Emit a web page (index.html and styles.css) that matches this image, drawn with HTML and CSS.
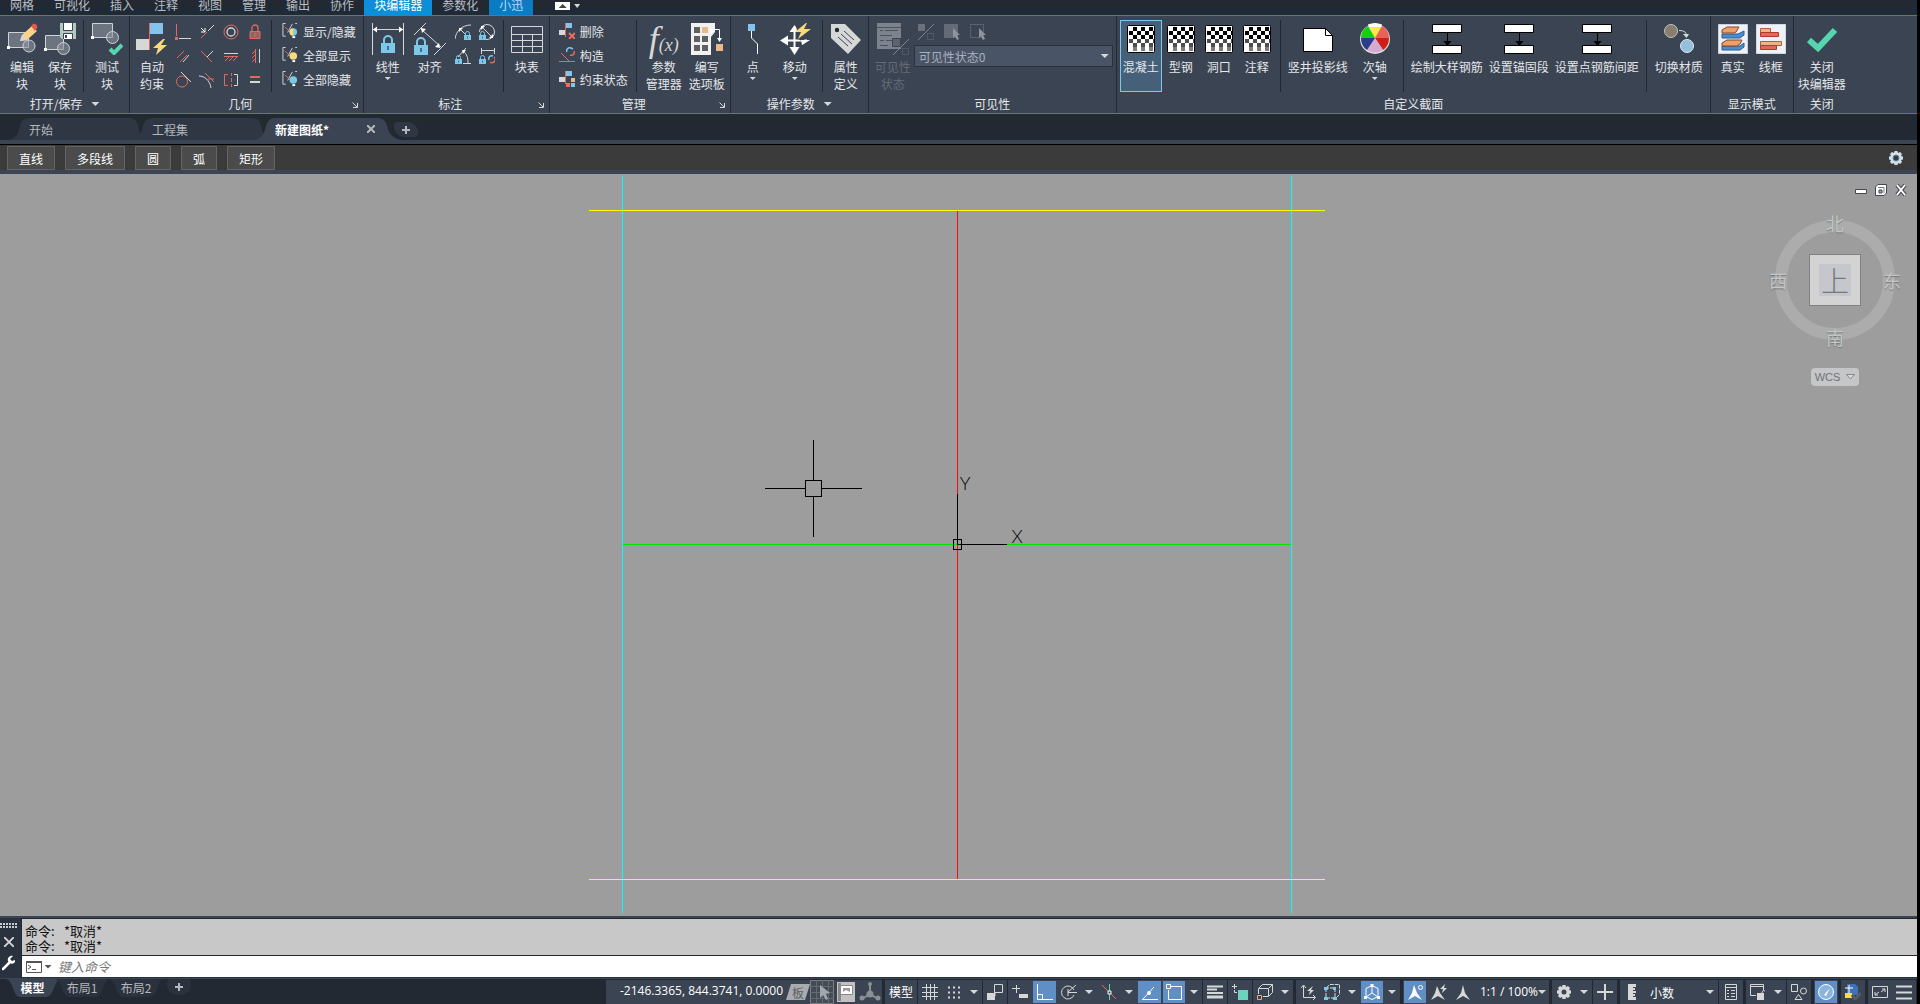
FILE: index.html
```html
<!DOCTYPE html>
<html lang="zh-CN">
<head>
<meta charset="utf-8">
<title>块编辑器</title>
<link rel="stylesheet" href="styles.css">
</head>
<body>
<svg class="defs" aria-hidden="true">
  <defs>
    <symbol id="bolt" viewBox="0 0 16 16"><path d="M11 0 1 9h5l-2 7L15 6H9l4-6z" fill="#f9d97c"/></symbol>
    <symbol id="lock" viewBox="0 0 14 18"><path d="M3 8V5a4 4 0 0 1 8 0v3" fill="none" stroke="#7cc8ea" stroke-width="2"/><path d="M0 8h14v10H0z" fill="#7cc8ea"/><path d="M7 11v4" stroke="#3b4453" stroke-width="1.4"/></symbol>
    <symbol id="edit" viewBox="0 0 32 32"><path d="M2.500 9.500h20v15h-20z" fill="#6c7480" stroke="#cfd2d6"/><circle cx="23" cy="23" r="6" fill="#8e959f" fill-opacity=".6" stroke="#cfd2d6"/><path d="M1 23h3v3H1z" fill="#fff"/><path d="M14 18l2-6L26 3l5 5-10 9z" fill="#f9d38a"/><path d="M25 3l2-2c2-1 5 1 4 4l-2 3z" fill="#e5584c"/><path d="M14 18l2-6 5 5z" fill="#d5d8da"/></symbol>
    <symbol id="save" viewBox="0 0 32 32"><path d="M1.500 12.500h18v14h-18z" fill="#6c7480" stroke="#cfd2d6"/><circle cx="19.500" cy="25.500" r="6" fill="#8e959f" fill-opacity=".6" stroke="#cfd2d6"/><path d="M0 25h3v3H0z" fill="#fff"/><path d="M16 0h16v16H18l-2-2z" fill="#b4c8bd"/><path d="M20 0h8v7h-8zM20 11h8v5h-8z" fill="#fff"/><path d="M19.500 0v7.500h9V0M19.500 16v-5.500h9V16" fill="none" stroke="#3b4453"/><path d="M21 12h2v3h-2z" fill="#3b4453"/></symbol>
    <symbol id="test" viewBox="0 0 32 32"><path d="M1.500.500h20v14h-20z" fill="#6c7480" stroke="#cfd2d6"/><circle cx="21.500" cy="14.500" r="6" fill="#8e959f" fill-opacity=".6" stroke="#cfd2d6"/><path d="M0 13h3v3H0z" fill="#fff"/><path d="M19 26l4 4 8-8" fill="none" stroke="#55d6ae" stroke-width="4"/></symbol>
    <symbol id="auto" viewBox="0 0 32 32"><path d="M14 0h13v11H14z" fill="#85c4ea"/><path d="M0 16h13v11H0z" fill="#d6d8d8"/><path d="M13.500 0v27" stroke="#e26a5c"/><use href="#bolt" x="16" y="16" width="16" height="16"/></symbol>
    <symbol id="g1" viewBox="0 0 16 16"><path d="M1.500 0v12" stroke="#e26a5c"/><path d="M4 14.500h12" stroke="#d6d8d8"/><path d="M0 13h3v3H0z" fill="#e26a5c"/></symbol>
    <symbol id="g2" viewBox="0 0 16 16"><path d="M2 14 8 8" stroke="#e26a5c"/><path d="M9 7l6-6" stroke="#d6d8d8"/><path d="M2 4l4 4M6 4v4H2" stroke="#fff" fill="none"/></symbol>
    <symbol id="g3" viewBox="0 0 16 16" fill="none"><circle cx="8" cy="8" r="7" stroke="#e26a5c"/><circle cx="8" cy="8" r="4" stroke="#d6d8d8" stroke-width="1.300"/></symbol>
    <symbol id="g4" viewBox="0 0 16 16"><path d="M5 7V4a3 3 0 0 1 6 0v3" fill="none" stroke="#e26a5c" stroke-width="1.300"/><path d="M3 7.500h10v7H3z" fill="#9b5f5d" stroke="#e26a5c"/><path d="M8 9v4" stroke="#e26a5c"/></symbol>
    <symbol id="g5" viewBox="0 0 16 16"><path d="M2 10 9 3M5 14l7-7" stroke="#e26a5c"/><path d="M8 14l6-7" stroke="#d6d8d8"/></symbol>
    <symbol id="g6" viewBox="0 0 16 16"><path d="M2 3l11 11" stroke="#e26a5c"/><path d="M8 9l6-6" stroke="#d6d8d8"/></symbol>
    <symbol id="g7" viewBox="0 0 16 16"><path d="M1 5.500h14" stroke="#d6d8d8"/><path d="M1 8.500h14M6 9l-4 4M10 9l-4 4M14 9l-4 4" stroke="#e26a5c"/></symbol>
    <symbol id="g8" viewBox="0 0 16 16"><path d="M12.500 1v14" stroke="#d6d8d8"/><path d="M8.500 1v14M8 3 5 6M8 7l-3 3M8 11l-3 3" stroke="#e26a5c"/></symbol>
    <symbol id="g9" viewBox="0 0 16 16" fill="none"><circle cx="7" cy="9.500" r="5.500" stroke="#e26a5c"/><path d="M6 0l10 10" stroke="#d6d8d8"/></symbol>
    <symbol id="g10" viewBox="0 0 16 16" fill="none"><path d="M0 4c5 0 11 4 12 12" stroke="#d6d8d8"/><path d="M6 1l9 9M9 7h6" stroke="#e26a5c"/></symbol>
    <symbol id="g11" viewBox="0 0 16 16" fill="none"><path d="M5 2.500H1.500v11H5M8.500 1v3M8.500 6v4M8.500 12v3" stroke="#e26a5c"/><path d="M11 2.500h3.500v11H11" stroke="#d6d8d8"/></symbol>
    <symbol id="g12" viewBox="0 0 16 16"><path d="M3 5h10" stroke="#e26a5c" stroke-width="2"/><path d="M3 10h10" stroke="#d6d8d8" stroke-width="2"/></symbol>
    <symbol id="showhide" viewBox="0 0 17 17"><path d="M4 .500H1V14h3M14 .500h2M11 1l-5 9" fill="none" stroke="#d6d8d8"/><path d="M3 4l6 6" stroke="#e26a5c"/><circle cx="12" cy="9.500" r="4" fill="#79cae8"/><path d="M12 5.500a4 4 0 0 0 0 8z" fill="#f9d97c"/><path d="M11 14h3v2h-3z" fill="#fff"/></symbol>
    <symbol id="showall" viewBox="0 0 17 17"><path d="M4 .500H1V14h3M14 .500h2M11 1l-5 9" fill="none" stroke="#d6d8d8"/><path d="M3 4l6 6" stroke="#e26a5c"/><circle cx="12" cy="9.500" r="4" fill="#f9d97c"/><path d="M11 14h3v2h-3z" fill="#fff"/></symbol>
    <symbol id="hideall" viewBox="0 0 17 17"><path d="M4 .500H1V14h3M14 .500h2M11 1l-5 9" fill="none" stroke="#d6d8d8"/><path d="M3 4l6 6" stroke="#e26a5c"/><circle cx="12" cy="9.500" r="4" fill="#79cae8"/><path d="M11 14h3v2h-3z" fill="#fff"/></symbol>
    <symbol id="linear" viewBox="0 0 32 32"><path d="M.500 0v32M31.500 0v32M1 6.500h30" stroke="#d6d8d8" fill="none"/><path d="M1 6.500l4-3v6zM31 6.500l-4-3v6z" fill="#fff"/><use href="#lock" x="9" y="12" width="14" height="18"/></symbol>
    <symbol id="aligned" viewBox="0 0 32 32"><path d="M0 12 12 0M20 32l12-12M7 6l20 18" stroke="#d6d8d8"/><path d="M7 5l5 1-4 4zM26 25l-5-1 4-4z" fill="#fff"/><use href="#lock" x="0" y="14" width="14" height="18"/></symbol>
    <symbol id="d1" viewBox="0 0 16 16"><path d="M0 15C1 7 7 1 16 1M5 5l6 6" fill="none" stroke="#d6d8d8"/><path d="M4 4h4l-4 4z" fill="#fff"/><use href="#lock" x="9" y="7" width="7" height="9"/></symbol>
    <symbol id="d2" viewBox="0 0 16 16"><circle cx="8" cy="8" r="7.500" fill="none" stroke="#d6d8d8"/><path d="M3 3l10 10" stroke="#d6d8d8"/><path d="M2 2h4L2 6zM14 14h-4l4-4z" fill="#fff"/><path d="M0 8h7v8H0z" fill="#3b4453"/><use href="#lock" x="0" y="7" width="7" height="9"/></symbol>
    <symbol id="d3" viewBox="0 0 16 16"><path d="M3 9l8-9M8 15.500h8M8 3c4 3 5 7 5 12" fill="none" stroke="#d6d8d8"/><path d="M7 2h4L8 6z" fill="#fff"/><use href="#lock" x="0" y="7" width="7" height="9"/></symbol>
    <symbol id="d4" viewBox="0 0 16 16"><path d="M2.500 0v6M15.500 0v6M3 2.500h12" stroke="#d6d8d8"/><use href="#lock" x="0" y="7" width="7" height="9"/><path d="M10 12a3 3 0 0 1 4-4" stroke="#7cc8ea" stroke-width="1.500" fill="none"/><path d="M15 9a3 3 0 0 1-4 5" stroke="#e26a5c" stroke-width="1.500" fill="none"/></symbol>
    <symbol id="table" viewBox="0 0 32 32"><path d="M.500 3.500h31v26H.500zM1 11.500h30M1 17.500h30M1 23.500h30M11.500 11v18M21.500 11v18" fill="none" stroke="#d6d8d8"/></symbol>
    <symbol id="m1" viewBox="0 0 16 16"><path d="M6 0h7v5H6z" fill="#85c4ea"/><path d="M0 7h6v5H0z" fill="#d6d8d8"/><path d="M6.500 0v14" stroke="#e26a5c"/><path d="M10 10l6 6M16 10l-6 6" stroke="#ef6a5e" stroke-width="2"/></symbol>
    <symbol id="m2" viewBox="0 0 16 16"><path d="M0 14.500h16M2 6l8 8" stroke="#e26a5c"/><path d="M8 5a3 3 0 0 1 4-4l2 1" stroke="#7cc8ea" stroke-width="1.500" fill="none"/><path d="M15 4a3 3 0 0 1-4 4" stroke="#e26a5c" stroke-width="1.500" fill="none"/></symbol>
    <symbol id="m3" viewBox="0 0 16 16"><path d="M6 0h7v5H6z" fill="#85c4ea"/><path d="M0 6h6v5H0z" fill="#d6d8d8"/><path d="M6.500 0v13" stroke="#e26a5c"/><path d="M12 7h4v4h-4z" fill="#e9b98a"/><path d="M7 12h4v4H7z" fill="#ef6a5e"/><path d="M12 12h4v4h-4z" fill="#7cc8ea"/></symbol>
    <symbol id="palette" viewBox="0 0 32 32"><path d="M0 0h24v9l-4 5v18H0z" fill="#f1f1f1"/><path d="M3 4h6v6H3zM3 13h6v6H3zM11 13h6v6h-6zM3 22h6v6H3zM11 22h6v6h-6z" fill="#606060"/><path d="M11 4h6v6h-6zM25 21h7v7h-7z" fill="#e9b98a"/><path d="M20 6.500h8.500V16" fill="none" stroke="#fff"/><path d="M26 15h5l-2.500 4zM19 6l5 2-4 3z" fill="#fff"/></symbol>
    <symbol id="point" viewBox="0 0 32 32"><path d="M11 1h7v7h-7z" fill="#85c4ea"/><path d="M14.500 8v7l6 6v10" fill="none" stroke="#fff"/></symbol>
    <symbol id="move" viewBox="0 0 32 32"><path d="M15.500 4v24M4 17.500h24" stroke="#fff" stroke-width="2"/><path d="M15.500 2l-5 7h10zM15.500 32l5-8h-10zM1 17.500l8-5v10zM31 17l-8 5v-5z" fill="#fff"/><path d="M17 1h15v11l-9 6-4-2z" fill="#3b4453"/><path d="M27 0 16 9h6l-3 7 13-10h-7l3-6z" fill="#f9d97c"/><path d="M22 17h8l-7 5z" fill="#fff"/></symbol>
    <symbol id="tag" viewBox="0 0 32 32"><path d="M1 1h14l16 16-13 14L1 15z" fill="#d6d8d8"/><circle cx="7" cy="7" r="2.200" fill="#222933"/><path d="M14 8l10 9M11 11l11 10M8 14l10 9" stroke="#3b4453"/></symbol>
    <symbol id="vis" viewBox="0 0 32 32"><path d="M0 0h24v26H0z" fill="#7d838c"/><path d="M0 4.500h24M3 7.500h3M8 7.500h13M3 12.500h12M3 17.500h4M9 17.500h7M3 22.500h8" stroke="#4a525f"/><path d="M15.500 15.500h8v8h-8z" fill="#5d6470" stroke="#3b4453"/><path d="M16 32 32 16" stroke="#7d838c"/><path d="M25.500 25.500h6v6h-6z" fill="none" stroke="#626a76" stroke-dasharray="1 1"/></symbol>
    <symbol id="v1" viewBox="0 0 16 16"><path d="M0 0h7v7H0z" fill="#6a717c"/><path d="M0 16 16 0" stroke="#7d838c"/><path d="M9.500 9.500h6v6h-6z" fill="none" stroke="#6a717c" stroke-dasharray="1 1"/></symbol>
    <symbol id="v2" viewBox="0 0 16 16"><path d="M0 0h14v14H0z" fill="#646b76"/><path d="M9 4v10l2-2 2 4 2-1-2-4h3z" fill="#8f959e"/></symbol>
    <symbol id="v3" viewBox="0 0 16 16"><path d="M.500.500h13v13H.500z" fill="none" stroke="#6a717c" stroke-dasharray="2 1"/><path d="M9 4v10l2-2 2 4 2-1-2-4h3z" fill="#8f959e"/></symbol>
    <pattern id="chk" width="8" height="8" patternUnits="userSpaceOnUse"><path d="M4 0h4v4H4zM0 4h4v4H0z"/></pattern>
    <symbol id="checker" viewBox="0 0 32 32"><rect x="2.500" y="2.500" width="27" height="27" rx="1" fill="#fff" stroke="#000"/><path d="M4 4h25v25H4z" fill="url(#chk)"/><path d="M3 16h26v8H3z" fill="#fff" fill-opacity=".3"/><path d="M3 24h26v5H3z" fill="#fff"/><path d="M8 24h4v4H8zM16 24h4v4h-4zM24 24h4v4h-4z" fill="#7c7c7c"/></symbol>
    <symbol id="shaft" viewBox="0 0 32 32"><path d="M1.500 5.500h22l7 7v16h-29z" fill="#fff" stroke="#000"/><path d="M23.500 5.500v7h7" fill="none" stroke="#000"/></symbol>
    <symbol id="wheel" viewBox="0 0 32 32"><circle cx="16" cy="16" r="15" fill="#ddd"/><path d="M16 15 9 2q7-3 14 0z" fill="#ffe93c"/><path d="M9 1.500q7-3 14 0L22 4H10z" fill="#fff"/><path d="M16 15l7-12q7 4 7 12z" fill="#ec6157"/><path d="M16 15h14q0 8-6 12z" fill="#cf1f15"/><path d="M16 15l8 12q-8 5-16 0z" fill="#d6a9d1"/><path d="M16 15H2q0 8 6 12z" fill="#2a3c8c"/><path d="M16 15 9 3Q2 7 2 15z" fill="#10d210"/></symbol>
    <symbol id="rebar" viewBox="0 0 32 32"><path d="M1.500 1.500h29v8h-29zM1.500 22.500h29v8h-29z" fill="#fff" stroke="#000"/><path d="M16.500 10v10" stroke="#000"/><path d="M12.500 18h8l-4 5z"/></symbol>
    <symbol id="swap" viewBox="0 0 32 32"><circle cx="8" cy="8" r="6.500" fill="#8b7c70" stroke="#b5c9b8"/><circle cx="24" cy="23" r="6.500" fill="#94bedb" stroke="#d9edf5"/><path d="M16 7.500q8 0 7 5" fill="none" stroke="#d6d8d8"/><path d="M20 11h6l-2.500 4z" fill="#d6d8d8"/></symbol>
    <symbol id="real" viewBox="0 0 32 32"><path d="M1.500 1.500h29v29h-29z" fill="#eef1f8" stroke="#c9cfdd"/><path d="M5 11h16l6-3v4l-4 3H5z" fill="#4b8fca" stroke="#2b5d96"/><path d="M5 7l5-3h12l-3 5-2 1H5z" fill="#e9a26e" stroke="#8c4420"/><path d="M5 23h18l4-3v4l-4 3H5z" fill="#4b8fca" stroke="#2b5d96"/><path d="M5 20l5-3h15l-2 4-3 2H5z" fill="#e9a26e" stroke="#8c4420"/></symbol>
    <symbol id="wire" viewBox="0 0 32 32"><path d="M1.500 1.500h29v29h-29z" fill="#eef1f8" stroke="#d4d8e0"/><path d="M5.500 5.500h10v4h-10zM5.500 18.500h21v4h-21z" fill="#e8b58a" stroke="#b1603a"/><path d="M5.500 9.500h18v4h-18zM5.500 22.500h16v4h-16z" fill="#e7655a" stroke="#b13a2a"/></symbol>
    <symbol id="done" viewBox="0 0 32 32"><path d="M3 17l9 8L29 7" fill="none" stroke="#55d6ae" stroke-width="6"/></symbol>
    <symbol id="launch" viewBox="0 0 6 6"><path d="M.500.500 5 5M5.500 1v4.500H1" fill="none" stroke="#d6d8d8"/></symbol>
    <symbol id="gear" viewBox="0 0 18 18"><path d="M7.500 1h3l.5 2 2-1 2 2-1 2 2 .500v3l-2 .500 1 2-2 2-2-1-.500 2h-3l-.500-2-2 1-2-2 1-2L2 9.500v-3L4 6 3 4l2-2 2 1z" fill="currentColor" transform="translate(0 1)"/></symbol>
  </defs>
</svg>

<nav class="menu">
  <button>网格</button><button>可视化</button><button>插入</button><button>注释</button><button>视图</button><button>管理</button><button>输出</button><button>协作</button><button class="active">块编辑器</button><button>参数化</button><button class="alt">小迅</button>
  <span class="collapse"><i class="tri up"></i></span><i class="tri"></i>
</nav>

<div class="ribbon">
  <section class="panel">
    <div class="body">
      <button class="item w38"><svg class="i32"><use href="#edit"/></svg>编辑<br>块</button>
      <button class="item w38"><svg class="i32"><use href="#save"/></svg>保存<br>块</button>
      <i class="sep"></i>
      <button class="item w38"><svg class="i32"><use href="#test"/></svg>测试<br>块</button>
    </div>
    <h2>打开/保存<i class="tri"></i></h2>
  </section>
  <section class="panel">
    <div class="body">
      <button class="item w38"><svg class="i32"><use href="#auto"/></svg>自动<br>约束</button>
      <div class="grid c4">
        <button aria-label="重合"><svg><use href="#g1"/></svg></button><button aria-label="共线"><svg><use href="#g2"/></svg></button><button aria-label="同心"><svg><use href="#g3"/></svg></button><button aria-label="固定"><svg><use href="#g4"/></svg></button>
        <button aria-label="平行"><svg><use href="#g5"/></svg></button><button aria-label="垂直"><svg><use href="#g6"/></svg></button><button aria-label="水平"><svg><use href="#g7"/></svg></button><button aria-label="竖直"><svg><use href="#g8"/></svg></button>
        <button aria-label="相切"><svg><use href="#g9"/></svg></button><button aria-label="平滑"><svg><use href="#g10"/></svg></button><button aria-label="对称"><svg><use href="#g11"/></svg></button><button aria-label="相等"><svg><use href="#g12"/></svg></button>
      </div>
      <i class="sep"></i>
      <div class="rows">
        <button><svg><use href="#showhide"/></svg>显示/隐藏</button>
        <button><svg><use href="#showall"/></svg>全部显示</button>
        <button><svg><use href="#hideall"/></svg>全部隐藏</button>
      </div>
    </div>
    <h2 class="has-launch">几何<svg class="launch"><use href="#launch"/></svg></h2>
  </section>
  <section class="panel">
    <div class="body">
      <button class="item w42"><svg class="i32"><use href="#linear"/></svg>线性<i class="tri sm"></i></button>
      <button class="item w42"><svg class="i32"><use href="#aligned"/></svg>对齐</button>
      <div class="grid c2">
        <button aria-label="半径"><svg><use href="#d1"/></svg></button><button aria-label="直径"><svg><use href="#d2"/></svg></button>
        <button aria-label="角度"><svg><use href="#d3"/></svg></button><button aria-label="转换"><svg><use href="#d4"/></svg></button>
      </div>
      <i class="sep"></i>
      <button class="item w38"><svg class="i32"><use href="#table"/></svg>块表</button>
    </div>
    <h2 class="has-launch">标注<svg class="launch"><use href="#launch"/></svg></h2>
  </section>
  <section class="panel">
    <div class="body">
      <div class="rows">
        <button><svg><use href="#m1"/></svg>删除</button>
        <button><svg><use href="#m2"/></svg>构造</button>
        <button><svg><use href="#m3"/></svg>约束状态</button>
      </div>
      <i class="sep"></i>
      <button class="item w46"><span class="fx"><b>f</b>(x)</span>参数<br>管理器</button>
      <button class="item w40"><svg class="i32"><use href="#palette"/></svg>编写<br>选项板</button>
    </div>
    <h2 class="has-launch">管理<svg class="launch"><use href="#launch"/></svg></h2>
  </section>
  <section class="panel">
    <div class="body">
      <button class="item w38"><svg class="i32"><use href="#point"/></svg>点<i class="tri sm"></i></button>
      <button class="item w46"><svg class="i32"><use href="#move"/></svg>移动<i class="tri sm"></i></button>
      <i class="sep"></i>
      <button class="item w38"><svg class="i32"><use href="#tag"/></svg>属性<br>定义</button>
    </div>
    <h2>操作参数<i class="tri"></i></h2>
  </section>
  <section class="panel">
    <div class="body">
      <button class="item w42" disabled><svg class="i32"><use href="#vis"/></svg>可见性<br>状态</button>
      <div class="visibility">
        <div class="vis-tools">
          <button aria-label="可见性模式" disabled><svg><use href="#v1"/></svg></button><button aria-label="使可见" disabled><svg><use href="#v2"/></svg></button><button aria-label="使不可见" disabled><svg><use href="#v3"/></svg></button>
        </div>
        <div class="combo"><select aria-label="可见性状态" disabled><option>可见性状态0</option></select><i class="tri"></i></div>
      </div>
    </div>
    <h2>可见性</h2>
  </section>
  <section class="panel">
    <div class="body">
      <button class="item w42 on"><svg class="i32"><use href="#checker"/></svg>混凝土</button>
      <button class="item w38"><svg class="i32"><use href="#checker"/></svg>型钢</button>
      <button class="item w38"><svg class="i32"><use href="#checker"/></svg>洞口</button>
      <button class="item w38"><svg class="i32"><use href="#checker"/></svg>注释</button>
      <i class="sep"></i>
      <button class="item w66"><svg class="i32"><use href="#shaft"/></svg>竖井投影线</button>
      <button class="item w48"><svg class="i32"><use href="#wheel"/></svg>次轴<i class="tri sm"></i></button>
      <i class="sep"></i>
      <button class="item w78"><svg class="i32"><use href="#rebar"/></svg>绘制大样钢筋</button>
      <button class="item w66"><svg class="i32"><use href="#rebar"/></svg>设置锚固段</button>
      <button class="item w90"><svg class="i32"><use href="#rebar"/></svg>设置点钢筋间距</button>
      <i class="sep"></i>
      <button class="item w56"><svg class="i32"><use href="#swap"/></svg>切换材质</button>
    </div>
    <h2>自定义截面</h2>
  </section>
  <section class="panel">
    <div class="body">
      <button class="item w38"><svg class="i32"><use href="#real"/></svg>真实</button>
      <button class="item w38"><svg class="i32"><use href="#wire"/></svg>线框</button>
    </div>
    <h2>显示模式</h2>
  </section>
  <section class="panel last">
    <div class="body">
      <button class="item w56"><svg class="i32"><use href="#done"/></svg>关闭<br>块编辑器</button>
    </div>
    <h2>关闭</h2>
  </section>
</div>

<nav class="docs">
  <button class="doc"><svg viewBox="0 0 140 22" preserveAspectRatio="none"><path d="M0 22C8 21 10 16 12 8Q14 0 21 0H121Q129 0 130 8 132 20 140 22z"/></svg>开始</button>
  <button class="doc"><svg viewBox="0 0 140 22" preserveAspectRatio="none"><path d="M0 22C8 21 10 16 12 8Q14 0 21 0H121Q129 0 130 8 132 20 140 22z"/></svg>工程集</button>
  <button class="doc current"><svg viewBox="0 0 148 22" preserveAspectRatio="none"><path d="M0 22C8 21 10 16 12 8Q14 0 21 0H124Q131 0 133 8 136 21 148 22z"/></svg>新建图纸*<span class="x"><svg viewBox="0 0 8 8"><path d="M0 0l8 8M8 0 0 8" stroke="#b4b8bd" stroke-width="2"/></svg></span></button>
  <button class="add" aria-label="新建"><svg viewBox="0 0 8 8"><path d="M4 0v8M0 4h8" stroke="#b4b8bd" stroke-width="2"/></svg></button>
</nav>

<div class="tools">
  <button>直线</button><button>多段线</button><button>圆</button><button>弧</button><button>矩形</button>
  <button class="settings" aria-label="设置"><svg viewBox="0 0 18 18"><use href="#gear" color="#d3e0ea"/><circle cx="9" cy="9" r="3" fill="#3b3b3b" stroke="#5d83a8"/></svg></button>
</div>

<main class="canvas">
  <svg class="drawing" viewBox="0 0 1917 742" preserveAspectRatio="xMidYMid meet" shape-rendering="crispEdges" fill="none">
    <path d="M622.500 2v737M1291.500 2v737" stroke="#0ff"/>
    <path d="M589 36.500h736M589 705.500h736" stroke="#ff0"/>
    <path d="M623 370.500h668" stroke="#00e600"/>
    <path d="M957.500 37v668" stroke="#f01010"/>
    <path d="M957.500 320v50M957 370.500h50M953.500 365.500h8v10h-8z" stroke="#000"/>
    <path d="M813.500 266v40M813.500 323v40M765 314.500h40M822 314.500h40M805.500 306.500h16v16h-16z" stroke="#000"/>
    <text class="axis" x="965" y="316" text-anchor="middle">Y</text>
    <text class="axis" x="1017" y="369" text-anchor="middle">X</text>
  </svg>
  <div class="winbtns">
    <button aria-label="最小化"><svg viewBox="0 0 12 12"><path d="M.500 5.500h11v4H.500z" fill="#fff" stroke="#444850"/></svg></button>
    <button aria-label="还原"><svg viewBox="0 0 12 12"><path d="M3 .500h8.500V9L9 11.500H.500V3z" fill="#fff" stroke="#444850"/><path d="M3 3.500h6V9" fill="none" stroke="#777"/><path d="M4 6h3v3H4z" fill="#9e9e9e" stroke="#444850"/></svg></button>
    <button aria-label="关闭"><svg viewBox="0 0 12 12"><path d="M2 1l8 10M10 1 2 11" stroke="#444850" stroke-width="4"/><path d="M2 1l8 10M10 1 2 11" stroke="#fff" stroke-width="2"/></svg></button>
  </div>
  <div class="cube">
    <span class="n">北</span><span class="w">西</span><button class="face"><span>上</span></button><span class="e">东</span><span class="s">南</span>
  </div>
  <button class="wcs">WCS<svg viewBox="0 0 9 6"><path d="M.500.500h8L4.500 5z" fill="#d8d8d8" stroke="#85898f"/></svg></button>
</main>

<div class="command">
  <div class="grip">
    <svg width="18" height="6" viewBox="0 0 18 6"><path d="M0 1h18M0 4h18" stroke="#c8ccd0" stroke-width="2" stroke-dasharray="2 1"/></svg>
    <button aria-label="关闭命令行"><svg width="10" height="10" viewBox="0 0 8 8"><path d="M0 0l8 8M8 0 0 8" stroke="#d6d8d8" stroke-width="1.500"/></svg></button>
    <button aria-label="自定义"><svg width="14" height="16" viewBox="0 0 14 16"><path d="M1 14l6-6" stroke="#fff" stroke-width="2.500" stroke-linecap="round"/><path d="M11 1C8 0 5 3 6 6s5 4 7 1V5l-3 1-2-2z" fill="#fff"/></svg></button>
  </div>
  <div class="console">
    <div class="history"><p><span>命令:</span>*取消*</p><p><span>命令:</span>*取消*</p></div>
    <label class="prompt"><svg width="16" height="12" viewBox="0 0 16 12"><path d="M.500.500h15v11H.500z" fill="none" stroke="#555"/><path d="M0 1h16" stroke="#555" stroke-width="2"/><path d="M2 4l3 2-3 2M6 8.500h4" fill="none" stroke="#555"/></svg><i class="tri"></i><input type="text" placeholder="键入命令" aria-label="键入命令"></label>
  </div>
</div>

<footer class="bottom">
  <nav class="layouts">
    <button class="lay current"><svg viewBox="0 0 54 18" preserveAspectRatio="none"><path d="M0 0h54C48 2 48 18 40 18H14C7 18 8 2 0 0z"/></svg>模型</button>
    <button class="lay"><svg viewBox="0 0 54 18" preserveAspectRatio="none"><path d="M0 0h54C48 2 48 18 40 18H14C7 18 8 2 0 0z"/></svg>布局1</button>
    <button class="lay"><svg viewBox="0 0 54 18" preserveAspectRatio="none"><path d="M0 0h54C48 2 48 18 40 18H14C7 18 8 2 0 0z"/></svg>布局2</button>
    <button class="addlay" aria-label="新建布局"><svg viewBox="0 0 8 8"><path d="M4 0v8M0 4h8" stroke="#b4b8bd" stroke-width="2"/></svg></button>
  </nav>
  <div class="status">
    <div class="grp">
      <span class="coords">-2146.3365, 844.3741, 0.0000</span>
      <button class="c board"><svg viewBox="0 0 24 18"><path d="M5 1h19l-5 16H0z" fill="#a8acae"/></svg><span>板</span></button>
      <button class="c" aria-label="选择"><svg class="full" viewBox="0 0 24 24"><path d="M.500.500h23v23H.500z" fill="#434b56" stroke="#7f7f7f"/><path d="M6.500 0v24M12.500 0v24M18.500 0v24M0 6.500h24M0 12.500h24M0 18.500h24" stroke="#66696e"/><path d="M10 5v13l3-3 3 5 2-1-2-5 4-1z" fill="#a3a7ac"/></svg></button>
      <button class="c" aria-label="图纸"><svg class="full" viewBox="0 0 24 24"><path d="M3 2h18v20H3z" fill="#c2c2c2"/><path d="M4 3h3v18H4z" fill="#888"/><path d="M6.500 5.500h12v9h-12z" fill="#fff" stroke="#888"/><path d="M9 8v4l3-2 4 2V8z" fill="#999"/></svg></button>
      <button class="c" aria-label="坐标系"><svg class="full" viewBox="0 0 24 24"><path d="M12 4v10L4 19M12 14l8 5" fill="none" stroke="#8b8e92" stroke-width="2"/><circle cx="12" cy="4" r="2" fill="#8b8e92"/><circle cx="12" cy="14" r="3.500" fill="#8b8e92"/><circle cx="4" cy="18" r="2.500" fill="#8b8e92"/><circle cx="20" cy="18" r="2.500" fill="#8b8e92"/></svg></button>
    </div>
    <div class="grp">
      <button class="c txt">模型</button>
      <button class="c bl" aria-label="栅格"><svg viewBox="0 0 16 16"><path d="M4.500 0v16M8.500 0v16M12.500 0v16M0 3.500h16M0 8.500h16M0 12.500h16" stroke="#d6d8d8"/></svg></button>
      <button class="c" aria-label="捕捉"><svg viewBox="0 0 16 16"><path d="M2 3.500h12M2 8.500h12M2 13.500h12" stroke="#d6d8d8" stroke-width="2" stroke-dasharray="2 3"/></svg></button><button class="v" aria-label="捕捉选项"><i class="tri"></i></button>
      <button class="c bl" aria-label="推断约束"><svg viewBox="0 0 16 16"><path d="M7.500.500h8v8h-8zM8 8v4" fill="none" stroke="#d6d8d8"/><path d="M0 9h8v7H0z" fill="#d6d8d8"/></svg></button>
      <button class="c bl" aria-label="动态输入"><svg viewBox="0 0 16 16"><path d="M4.500 1v8M0 4.500h8" stroke="#d6d8d8"/><path d="M7 10h9v4H7z" fill="#d6d8d8"/></svg></button>
      <button class="c act bl" aria-label="正交"><svg viewBox="0 0 16 16"><path d="M.500 0v15.500H16M1 10.500h4.500V15" fill="none" stroke="#fff"/></svg></button>
      <button class="c" aria-label="极轴"><svg viewBox="0 0 16 16"><path d="M13 6a6.500 6.500 0 1 0 0 5M7 8.500h9M7 8l8-7M7 5v7" fill="none" stroke="#d6d8d8"/></svg></button><button class="v" aria-label="极轴选项"><i class="tri"></i></button>
      <button class="c" aria-label="等轴测"><svg viewBox="0 0 16 16"><path d="M1 1l14 14" stroke="#e26a5c"/><path d="M8.500 0v16" stroke="#55d6ae"/><path d="M7 7h3v3H7z" fill="#3b4453" stroke="#fff"/></svg></button><button class="v" aria-label="等轴测选项"><i class="tri"></i></button>
      <button class="c act bl" aria-label="对象追踪"><svg viewBox="0 0 16 16"><path d="M0 15.500h16M1 15 12 3" stroke="#fff"/><circle cx="7" cy="9" r="2" fill="#fff"/></svg></button>
      <button class="c act" aria-label="对象捕捉"><svg viewBox="0 0 16 16"><path d="M5 2.500h10.500v13h-13V6M.500.500h4v4h-4z" fill="none" stroke="#fff"/></svg></button><button class="v" aria-label="捕捉设置"><i class="tri"></i></button>
      <button class="c bl" aria-label="线宽"><svg viewBox="0 0 16 16"><path d="M0 2.500h16M0 5.500h10M0 9h16" stroke="#d6d8d8" stroke-width="2"/><path d="M0 13h16" stroke="#d6d8d8" stroke-width="3"/></svg></button>
      <button class="c bl" aria-label="透明度"><svg viewBox="0 0 16 16"><path d="M2.500 0v5M0 2.500h5M2.500 6v2.500H5" fill="none" stroke="#d6d8d8"/><path d="M6 6h10v10H6z" fill="#6cd3bd"/></svg></button>
      <button class="c bl" aria-label="三维捕捉"><svg viewBox="0 0 16 16"><path d="M1.500 10V4.500l4-4h10v8l-4 4H6M2 4.500h9.500V12M11.500 4.500l4-4" fill="none" stroke="#d6d8d8"/><path d="M.500 11.500h4v4h-4z" fill="none" stroke="#e9a77c"/></svg></button><button class="v" aria-label="三维选项"><i class="tri"></i></button>
    </div>
    <div class="grp">
      <button class="c" aria-label="动态坐标"><svg viewBox="0 0 16 16"><path d="M3.500 2v11.500H15M1 4l2.500-3L6 4M13 11l2.500 2.500L13 16" fill="none" stroke="#d6d8d8"/><path d="M13 2 7 7h3l-1 4 5-5h-3z" fill="#d6d8d8"/></svg></button>
      <button class="c" aria-label="选择过滤"><svg viewBox="0 0 16 16"><path d="M2 4l4-3.500h9.500v10l-3 3M2 4v10h9V4H2" fill="none" stroke="#d6d8d8" stroke-dasharray="4 1"/><path d="M0 3h4v3H0zM0 13h4v3H0zM9 13h4v3H9zM9 3h3v3H9z" fill="#7cc8ea"/></svg></button><button class="v" aria-label="过滤选项"><i class="tri"></i></button>
      <button class="c act" aria-label="小控件"><svg viewBox="0 0 16 16"><path d="M8 1.500l6 3v8l-6 3-6-3v-8zM8 2v7M8 9l-6 4M8 9l6 4" fill="none" stroke="#fff"/><path d="M6.500 0h3v3h-3zM0 12h3v3H0zM13 12h3v3h-3z" fill="#fff"/></svg></button><button class="v" aria-label="小控件选项"><i class="tri"></i></button>
    </div>
    <div class="grp">
      <button class="c act" aria-label="注释可见性"><svg viewBox="0 0 16 16"><path d="M7 1l3 8 5 7-7-4-7 4 4-7z" fill="#fff"/><circle cx="13.500" cy="3.500" r="2" fill="none" stroke="#fff"/></svg></button>
      <button class="c" aria-label="自动缩放"><svg viewBox="0 0 16 16"><path d="M6 2l3 7 5 7-7-4-7 4 4-7z" fill="#d6d8d8"/><path d="M14 0 9 5h3l-1 4 5-5h-3z" fill="#d6d8d8"/></svg></button>
      <button class="c" aria-label="注释"><svg viewBox="0 0 16 16"><path d="M8 1l2 8 5 7-7-4-7 4 5-7z" fill="#d6d8d8"/></svg></button>
      <button class="scale">1:1 / 100%<i class="tri"></i></button>
    </div>
    <div class="grp">
      <button class="c gearc" aria-label="切换工作空间"><svg viewBox="0 0 18 18"><use href="#gear" color="#d6d8d8"/><circle cx="9" cy="9" r="2.500" fill="#3b4453"/></svg></button><button class="v" aria-label="工作空间选项"><i class="tri"></i></button>
      <button class="c bl" aria-label="监视器"><svg viewBox="0 0 16 16"><path d="M8 0v16M0 8h16" stroke="#d6d8d8" stroke-width="2"/></svg></button>
    </div>
    <div class="grp">
      <button class="units"><svg viewBox="0 0 16 16"><path d="M4 0h8v3H9v1h2v2H9v1h3v2H9v1h2v2H9v1h3v3H4z" fill="#d6d8d8"/></svg>小数<i class="tri"></i></button>
      <button class="c bl" aria-label="快捷特性"><svg viewBox="0 0 16 16"><path d="M2.500.500h11v15h-11zM2 3.500h12M4 6.500h2M8 6.500h4M4 9.500h2M8 9.500h4M4 12.500h2M8 12.500h4" fill="none" stroke="#d6d8d8"/></svg></button>
    </div>
    <div class="grp">
      <button class="c" aria-label="锁定界面"><svg viewBox="0 0 16 16"><path d="M6 11.500H.500V.500h13V6M0 2.500h14M12 9V8a2 2 0 0 1 3-1" fill="none" stroke="#d6d8d8"/><path d="M7 9h7v7H7z" fill="#d6d8d8"/></svg></button><button class="v" aria-label="锁定选项"><i class="tri"></i></button>
      <button class="c bl" aria-label="隔离对象"><svg viewBox="0 0 16 16"><path d="M.500.500h6v7h-6zM7 15.500l-3 0 3.500-5 3.500 5z" fill="none" stroke="#d6d8d8"/><circle cx="12.500" cy="7" r="3" fill="none" stroke="#d6d8d8"/></svg></button>
    </div>
    <div class="grp"><button class="c act" aria-label="图形性能"><svg viewBox="0 0 16 16"><circle cx="8" cy="8" r="7.500" fill="#8ab4dc" stroke="#fff"/><path d="M6 11l6-7-4 8z" fill="#fff"/></svg></button></div>
    <div class="grp"><button class="c" aria-label="插件"><svg viewBox="0 0 16 16"><path d="M2 0h8l3 3v8H2z" fill="#3d72b8"/><path d="M4 1v8M0 4h8" stroke="#fff"/><path d="M0 9h7v5H0z" fill="#f3e03a"/><path d="M7 11l3 4 6-6" fill="none" stroke="#555b63" stroke-width="3"/></svg></button></div>
    <div class="grp">
      <button class="c" aria-label="全屏"><svg viewBox="0 0 16 16"><path d="M.500 2.500h15v11H.500zM3 11l4-3M13 5 9 8M3 8v3h3M10 5h3v3" fill="none" stroke="#d6d8d8"/></svg></button>
      <button class="c" aria-label="自定义"><svg viewBox="0 0 16 16"><path d="M0 2.500h16M0 8.500h16M0 14.500h16" stroke="#d6d8d8" stroke-width="2"/></svg></button>
    </div>
  </div>
</footer>
</body>
</html>
```
FILE: styles.css
```css
:root {
  --dark: #222933;
  --panel: #3b4453;
  --line: #0a8fd8;
  --text: #e4e6e8;
}

* { box-sizing: border-box; }

body {
  margin: 0;
  height: 100vh;
  display: flex;
  flex-direction: column;
  overflow: hidden;
  background: var(--dark);
  border-right: 3px solid #000;
  color: var(--text);
  font: 12px/17px "Noto Sans CJK SC", "Noto Sans", sans-serif;
}

button, input, select {
  font: inherit;
  color: inherit;
  background: none;
  border: 0;
  padding: 0;
  margin: 0;
  border-radius: 0;
}

svg { display: block; flex: none; }
.defs { position: absolute; width: 0; height: 0; }

.tri {
  display: block;
  flex: none;
  width: 8px;
  height: 4px;
  background: #d6d8d8;
  clip-path: polygon(0 0, 100% 0, 50% 100%);
}
.tri.up { background: #444; clip-path: polygon(50% 0, 100% 100%, 0 100%); }
.tri.sm { width: 6px; height: 3px; margin: 2px auto 0; }

/* Ribbon tabs */
.menu {
  display: flex;
  align-items: flex-end;
  height: 16px;
  flex: none;
  overflow: hidden;
  border-bottom: 1px solid var(--line);
}
.menu button { height: 20px; line-height: 18px; padding: 0 10px; color: #b9bdc3; }
.menu button.active { background: var(--line); color: #fff; }
.menu button.alt { margin-left: 1px; background: #0b7cc4; color: #b9dcf5; }
.menu > .tri { margin: 0 0 7px 4px; width: 6px; }
.collapse {
  display: flex;
  align-items: center;
  justify-content: center;
  width: 15px;
  height: 8px;
  margin: 0 0 5px 22px;
  background: #fff;
}

/* Ribbon panels */
.ribbon {
  display: flex;
  flex: none;
  height: 98px;
  background: var(--panel);
  border-bottom: 1px solid var(--line);
}
.panel {
  display: flex;
  flex-direction: column;
  padding: 4px 3px 0;
  border-right: 1px solid var(--dark);
}
.panel.last { padding-left: 0; border: 0; }
.panel .body { display: flex; height: 76px; }
.panel h2 {
  display: flex;
  align-items: center;
  justify-content: center;
  gap: 9px;
  height: 16px;
  margin: 0;
  font-size: 12px;
  font-weight: 400;
  line-height: 16px;
}
.has-launch { position: relative; padding-right: 12px; }
.panel .launch { position: absolute; right: 2px; top: 6px; width: 6px; height: 6px; }
.sep { width: 1px; height: 72px; margin: 0 4px; background: var(--dark); flex: none; }
.item {
  display: flow-root;
  align-self: flex-start;
  height: 72px;
  padding: 3px 0 0;
  line-height: 17px;
  white-space: nowrap;
  text-align: center;
}
.item .i32 { width: 32px; height: 32px; margin: 0 auto 3px; }
.item:not(:has(br)) { padding-bottom: 17px; }
.item:has(.tri) { padding-bottom: 12px; }
.item:disabled { color: #636b78; }
.item.on { background: #46607a; box-shadow: inset 0 0 0 1px #7cc8ea; }
.w38 { width: 38px; }
.w40 { width: 40px; }
.w42 { width: 42px; }
.w46 { width: 46px; }
.w48 { width: 48px; }
.w56 { width: 56px; }
.w66 { width: 66px; }
.w78 { width: 78px; }
.w90 { width: 90px; }

.grid { display: grid; grid-auto-rows: 24px; }
.grid.c4 { grid-template-columns: repeat(4, 24px); }
.grid.c2 { grid-template-columns: repeat(2, 24px); }
.grid button, .vis-tools button { display: flex; align-items: center; justify-content: center; }
.grid svg, .vis-tools svg { width: 16px; height: 16px; }

.rows { display: flex; flex-direction: column; padding: 0 4px 0 6px; }
.rows button { display: flex; align-items: center; gap: 5px; height: 24px; padding-bottom: 2px; white-space: nowrap; }
.rows svg { width: 16px; height: 16px; }

.fx { display: block; height: 32px; margin-bottom: 3px; font: italic 18px/32px "Liberation Serif", serif; color: #d6d8d8; }
.fx b { font-size: 36px; font-weight: 400; }

.visibility { width: 199px; }
.vis-tools { display: flex; height: 24px; gap: 1px; }
.vis-tools button { width: 25px; }
.combo { display: flex; align-items: center; height: 22px; margin-top: 1px; padding: 0 3px 0 4px; background: #4a5467; border: 1px solid #2b323e; }
.combo select { flex: 1; appearance: none; opacity: 1; color: #aab0ba; }

/* Document tabs */
.docs {
  display: flex;
  align-items: flex-start;
  flex: none;
  height: 31px;
  padding: 4px 0 0 8px;
  background: var(--dark);
  border-bottom: 1px solid #000;
  box-shadow: inset 0 -4px 0 var(--panel);
}
.doc {
  position: relative;
  z-index: 0;
  width: 123px;
  height: 22px;
  padding: 0 0 0 21px;
  line-height: 21px;
  text-align: left;
  color: #b4b8bd;
}
.doc > svg { position: absolute; z-index: -1; left: 0; top: 0; width: 140px; height: 22px; fill: #303744; }
.doc.current { font-weight: 700; color: #fff; }
.doc.current > svg { width: 148px; fill: var(--panel); }
.doc .x { position: absolute; right: 2px; top: 7px; }
.x svg, .add svg, .addlay svg { width: 8px; height: 8px; }
.add { display: flex; align-items: center; justify-content: center; width: 24px; height: 15px; margin: 4px 0 0 17px; background: #303744; border-radius: 4px 10px 4px 10px; }

/* Drawing toolbar */
.tools {
  display: flex;
  align-items: flex-end;
  gap: 10px;
  flex: none;
  height: 29px;
  padding: 0 12px 0 7px;
  background: #3b3b3b;
  border-bottom: 4px solid var(--panel);
}
.tools button { height: 24px; padding: 0 11px; background: #4a4b4a; border: 1px solid #646464; color: #fff; }
.tools .settings { margin-left: auto; padding: 0; border: 0; background: none; }
.settings svg { width: 18px; height: 18px; }

/* Model space */
.canvas { position: relative; flex: 1; min-height: 0; background: #9d9d9d; }
.drawing { width: 100%; height: 100%; }
.axis { font: 300 18px "Lato", sans-serif; fill: #000; shape-rendering: auto; }
.winbtns { position: absolute; right: 10px; top: 10px; display: flex; gap: 8px; }
.winbtns svg { width: 12px; height: 12px; }
.cube {
  position: absolute;
  right: 22px;
  top: 46px;
  width: 120px;
  height: 120px;
  border: 12px solid #acacac;
  border-radius: 50%;
  display: flex;
  align-items: center;
  justify-content: center;
  font-size: 18px;
  line-height: 18px;
  color: #c3c7c7;
  text-shadow: 0 1px 1px #777;
}
.cube > span { position: absolute; }
.cube .n { top: -18px; }
.cube .s { bottom: -18px; }
.cube .w { left: -18px; }
.cube .e { right: -18px; }
.face { width: 52px; height: 52px; padding: 9px; background: #d3d3d3; border: 1px solid #7f8184; }
.face span { display: block; background: #c5c7cc; color: #74767b; font-size: 28px; font-weight: 300; line-height: 32px; text-shadow: none; }
.wcs {
  position: absolute;
  right: 58px;
  top: 194px;
  display: flex;
  align-items: center;
  justify-content: center;
  gap: 6px;
  width: 48px;
  height: 18px;
  border-radius: 4px;
  background: #c5c6c7;
  color: #6f7277;
  font: 11px/18px "Liberation Sans", sans-serif;
}
.wcs svg { width: 9px; height: 6px; }

/* Command line */
.command { display: flex; flex: none; height: 62px; background: #2a323f; border-top: 2px solid var(--panel); }
.grip { display: flex; flex-direction: column; align-items: center; justify-content: space-between; width: 21px; padding: 5px 4px 7px 0; }
.console { flex: 1; border: solid var(--dark); border-width: 1px 0 0 1px; color: #111; }
.history { height: 37px; padding: 4px 3px 0; background: #c8c8c8; border-bottom: 1px solid var(--dark); }
.history p { margin: 0; font-size: 13px; line-height: 15px; }
.history span { display: inline-block; width: 39px; }
.prompt { display: flex; align-items: center; height: 21px; padding: 0 4px; background: #fff; }
.prompt .tri { margin: 0 6px 0 2px; background: #555; }
.prompt input { flex: 1; outline: 0; font-size: 13px; font-style: italic; }
.prompt input::placeholder { color: #777; }

/* Layout tabs and status bar */
.bottom { display: flex; justify-content: space-between; flex: none; height: 26px; border-top: 1px solid var(--panel); }
.layouts { display: flex; padding-left: 10px; }
.lay { position: relative; z-index: 0; height: 18px; width: 54px; line-height: 16px; color: #b4b8bd; }
.lay > svg { position: absolute; z-index: -1; inset: 0; width: 54px; height: 18px; fill: #2b323e; }
.lay.current { font-weight: 700; color: #fff; width: 45px; }
.lay.current > svg { fill: var(--panel); left: -4px; }
.addlay { display: flex; align-items: center; justify-content: center; width: 24px; height: 16px; margin-left: 4px; background: #2b323e; border-radius: 4px 4px 10px 10px; }
.status { display: flex; gap: 3px; padding: 1px 1px 0 0; color: #fff; }
.grp { display: flex; background: var(--panel); }
.coords { width: 180px; padding-left: 14px; font: 12px/22px "Open Sans", sans-serif; white-space: nowrap; }
.c, .v { display: flex; align-items: center; justify-content: center; height: 24px; width: 24px; }
.v { width: 16px; }
.c svg, .units svg { width: 16px; height: 16px; }
.c svg.full { width: 24px; height: 24px; }
.gearc svg { width: 18px; height: 18px; }
.bl { border-left: 1px solid var(--dark); width: 25px; }
.act { background: #5f8fc4; border: 1px solid var(--panel); }
.c.txt { width: 32px; padding-bottom: 2px; }
.board { position: relative; }
.board svg { width: 24px; height: 18px; }
.board span { position: absolute; color: #5c6065; }
.scale { display: flex; align-items: center; justify-content: space-between; width: 74px; padding: 0 4px 0 5px; font: 12px/22px "Open Sans", sans-serif; white-space: nowrap; }
.units { display: flex; align-items: center; width: 98px; padding: 0 4px; }
.units svg { margin-right: 10px; }
.units .tri { margin-left: auto; }
```
